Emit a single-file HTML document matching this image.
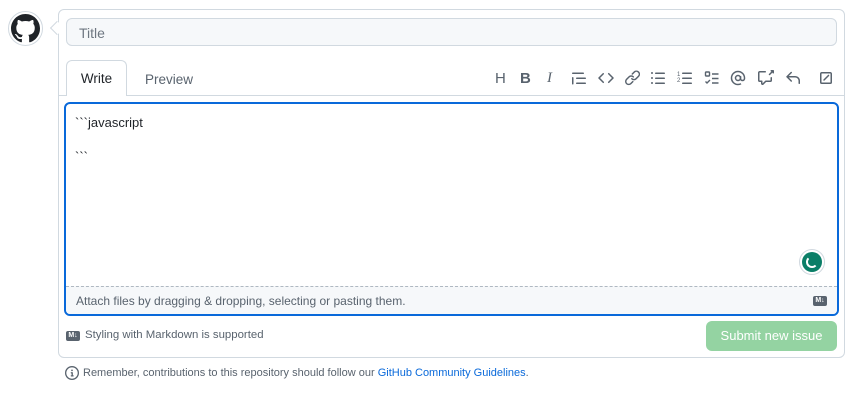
<!DOCTYPE html>
<html><head><meta charset="utf-8"><style>
*{box-sizing:border-box}
body{margin:0;width:854px;height:401px;background:#fff;font-family:"Liberation Sans",sans-serif;position:relative;overflow:hidden;color:#1f2328}
.abs{position:absolute}
.ic{position:absolute;top:70px;width:16px;height:16px}
.ic svg{width:16px;height:16px;fill:#59636e}
.ic svg.st{fill:none}
</style></head><body>
<div class="abs" style="left:8px;top:11px;width:35px;height:35px;border-radius:50%;border:1px solid #d1d9e0;background:#fff"></div>
<svg class="abs" style="left:11px;top:14px" width="29" height="29" viewBox="0 0 16 16"><path fill="#1f2328" d="M8 0C3.58 0 0 3.58 0 8c0 3.54 2.290 6.53 5.47 7.59.4.07.55-.17.55-.38 0-.19-.01-.82-.01-1.49-2.01.37-2.53-.49-2.69-.94-.09-.23-.48-.94-.82-1.13-.28-.15-.68-.52-.01-.53.63-.01 1.08.58 1.23.82.72 1.21 1.87.87 2.330.66.07-.52.28-.87.51-1.07-1.78-.2-3.64-.89-3.64-3.95 0-.87.31-1.590.82-2.150-.08-.2-.36-1.020.08-2.12 0 0 .67-.21 2.2.82.64-.18 1.32-.27 2-.27.68 0 1.36.09 2 .27 1.53-1.04 2.2-.82 2.2-.82.44 1.1.16 1.92.08 2.12.51.56.82 1.27.82 2.15 0 3.07-1.87 3.75-3.65 3.95.29.25.54.73.54 1.48 0 1.07-.01 1.93-.01 2.2 0 .21.15.46.55.38A8.013 8.013 0 0016 8c0-4.42-3.58-8-8-8z"/></svg>
<div class="abs" style="left:58px;top:9px;width:787px;height:349px;border:1px solid #d1d9e0;border-radius:6px"></div>
<div class="abs" style="left:52px;top:23px;width:10px;height:10px;border-left:1px solid #d1d9e0;border-bottom:1px solid #d1d9e0;background:#fff;transform:rotate(45deg)"></div>
<div class="abs" style="left:66px;top:18px;width:771px;height:28px;border:1px solid #d1d9e0;border-radius:6px;background:#f6f8fa;padding:6px 12px;font-size:14px;color:#6e7781">Title</div>
<div class="abs" style="left:59px;top:95px;width:785px;height:1px;background:#d1d9e0"></div>
<div class="abs" style="left:66px;top:60px;width:61px;height:36px;border:1px solid #d1d9e0;border-bottom:none;border-radius:6px 6px 0 0;background:#fff;font-size:13.5px;text-align:center;line-height:36px">Write</div>
<div class="abs" style="left:145px;top:72px;font-size:13.5px;color:#59636e">Preview</div>
<div class="abs" style="left:495px;top:70px;font-size:15px;color:#59636e">H</div>
<div class="abs" style="left:520px;top:70px;font:bold 15px 'Liberation Sans';color:#59636e">B</div>
<div class="abs" style="left:547px;top:70px;font:italic 15px 'Liberation Serif';color:#59636e">I</div>
<div class="ic" style="left:571px"><svg viewBox="0 0 16 16"><path d="M1.75 2.5h10.5a.75.75 0 010 1.5H1.75a.75.75 0 010-1.5zm4 5h8.5a.75.75 0 010 1.5h-8.5a.75.75 0 010-1.5zm0 5h8.5a.75.75 0 010 1.5h-8.5a.75.75 0 010-1.5zM2.5 7.75v6a.75.75 0 01-1.5 0v-6a.75.75 0 011.5 0z"/></svg></div>
<div class="ic" style="left:598px"><svg viewBox="0 0 16 16"><path d="M4.72 3.22a.75.75 0 011.06 1.06L2.06 8l3.72 3.72a.75.75 0 11-1.06 1.06L.47 8.53a.75.75 0 010-1.06zm6.56 0a.75.75 0 10-1.06 1.06L13.94 8l-3.72 3.72a.75.75 0 101.06 1.06l4.25-4.25a.75.75 0 000-1.06z"/></svg></div>
<div class="ic" style="left:624px"><svg viewBox="0 0 16 16"><path d="M7.78 3.47l2-2a3.75 3.75 0 015.3 5.3l-2.5 2.5a3.75 3.75 0 01-5.3 0 .75.75 0 011.06-1.06 2.25 2.25 0 003.18 0l2.5-2.5a2.25 2.25 0 00-3.18-3.18l-2 2a.75.75 0 01-1.06-1.06zm-4.690 9.64a2.25 2.25 0 003.18 0l2-2a.75.75 0 011.06 1.06l-2 2a3.75 3.75 0 01-5.3-5.3l2.5-2.5a3.75 3.75 0 015.3 0 .75.75 0 01-1.06 1.06 2.25 2.25 0 00-3.18 0l-2.5 2.5a2.25 2.25 0 000 3.18z"/></svg></div>
<div class="ic" style="left:650px"><svg viewBox="0 0 16 16"><path d="M5.75 2.5h8.5a.75.75 0 010 1.5h-8.5a.75.75 0 010-1.5zm0 5h8.5a.75.75 0 010 1.5h-8.5a.75.75 0 010-1.5zm0 5h8.5a.75.75 0 010 1.5h-8.5a.75.75 0 010-1.5zM2 14a1 1 0 110-2 1 1 0 010 2zm1-6a1 1 0 11-2 0 1 1 0 012 0zM2 4a1 1 0 110-2 1 1 0 010 2z"/></svg></div>
<div class="ic" style="left:677px"><svg viewBox="0 0 16 16"><path d="M5 3.25a.75.75 0 01.75-.75h8.5a.75.75 0 010 1.5h-8.5A.75.75 0 015 3.25zm0 5a.75.75 0 01.75-.75h8.5a.75.75 0 010 1.5h-8.5A.75.75 0 015 8.25zm0 5a.75.75 0 01.75-.75h8.5a.75.75 0 010 1.5h-8.5a.75.75 0 01-.75-.75z"/><text x="0" y="6" font-size="6" font-family="Liberation Sans" fill="#59636e">1</text><text x="0" y="12" font-size="6" font-family="Liberation Sans" fill="#59636e">2</text></svg></div>
<div class="ic" style="left:704px"><svg class="st" viewBox="0 0 16 16" stroke="#59636e" stroke-width="1.4"><rect x="1.5" y="2" width="4" height="4" rx=".8"/><path d="M8 4h6.5M8 8.5h6.5M8 13h6.5M1.5 11.5l1.5 1.5 3-3"/></svg></div>
<div class="ic" style="left:730px"><svg class="st" viewBox="0 0 16 16" stroke="#59636e" stroke-width="1.5"><circle cx="8" cy="8" r="2.5"/><path d="M10.5 6v2.5a2 2 0 004 0V8A6.5 6.5 0 108 14.5c1.2 0 2.2-.3 3-.8"/></svg></div>
<div class="ic" style="left:758px"><svg viewBox="0 0 16 16"><path d="M1.75 1h5.5a.75.75 0 010 1.5h-5.5a.25.25 0 00-.25.25v7.5c0 .14.11.25.25.25h2c.41 0 .75.34.75.75v2.190l2.72-2.72a.75.75 0 01.53-.22h4.5a.25.25 0 00.25-.25v-2.5a.75.75 0 011.5 0v2.5A1.75 1.75 0 0112.25 12H8.06l-2.57 2.57A1.46 1.46 0 013 13.54V12H1.75A1.75 1.75 0 010 10.25v-7.5C0 1.78.78 1 1.75 1zM12.5.75a.75.75 0 01.75-.75h2a.75.75 0 01.75.75v2a.75.75 0 01-1.5 0v-.19l-2.47 2.47a.75.75 0 01-1.06-1.06l2.47-2.47h-.19A.75.75 0 0112.5.75z"/></svg></div>
<div class="ic" style="left:785px"><svg viewBox="0 0 16 16"><path d="M6.78 1.97a.75.75 0 010 1.06L3.81 6h6.44A4.75 4.75 0 0115 10.75v2.5a.75.75 0 01-1.5 0v-2.5a3.25 3.25 0 00-3.25-3.25H3.81l2.97 2.97a.75.75 0 11-1.06 1.06L1.47 7.28a.75.75 0 010-1.06l4.25-4.25a.75.75 0 011.06 0z"/></svg></div>
<div class="ic" style="left:818px"><svg viewBox="0 0 16 16"><path d="M3.75 2h8.5c.97 0 1.75.78 1.75 1.75v8.5A1.75 1.75 0 0112.25 14h-8.5A1.75 1.75 0 012 12.25v-8.5C2 2.78 2.78 2 3.75 2zm8.5 1.5h-8.5a.25.25 0 00-.25.25v8.5c0 .14.11.25.25.25h8.5a.25.25 0 00.25-.25v-8.5a.25.25 0 00-.25-.25zM5.47 9.47l4.5-4.5a.75.75 0 111.06 1.06l-4.5 4.5a.75.75 0 01-1.06-1.06z"/></svg></div>
<div class="abs" style="left:64px;top:102px;width:775px;height:214px;border:2px solid #0969da;border-radius:6px;overflow:hidden">
<div class="abs" style="left:0;top:182px;width:771px;height:28px;background:#f6f8fa;border-top:1px dashed #afb8c1"></div>
<div class="abs" style="left:9px;top:11px;font-size:13px">&#96;&#96;&#96;javascript</div>
<div class="abs" style="left:9px;top:45px;font-size:13px">&#96;&#96;&#96;</div>
<div class="abs" style="left:10px;top:190px;font-size:12px;color:#59636e">Attach files by dragging &amp; dropping, selecting or pasting them.</div>
<div class="abs" style="left:747px;top:192px;width:14px;height:10px;background:#59636e;border-radius:2px;color:#fff;font:bold 7px 'Liberation Sans';text-align:center;line-height:10px">M↓</div>
</div>
<div class="abs" style="left:799px;top:249px;width:26px;height:26px;border-radius:50%;background:#fff;border:1px solid #d1d9e0"></div>
<div class="abs" style="left:802px;top:252px;width:20px;height:20px;border-radius:50%;background:#0a7e67"></div>
<div class="abs" style="left:806px;top:256px;width:12px;height:12px;border-radius:50%;border:2px solid #fff;border-top-color:transparent;border-right-color:transparent"></div>
<div class="abs" style="left:66px;top:331px;width:14px;height:10px;background:#59636e;border-radius:2px;color:#fff;font:bold 7px 'Liberation Sans';text-align:center;line-height:10px">M↓</div>
<div class="abs" style="left:85px;top:329px;font-size:11.4px;color:#59636e">Styling with Markdown is supported</div>
<div class="abs" style="left:706px;top:321px;width:131px;height:30px;border-radius:6px;background:#94d3a2;color:#fff;font-size:13px;text-align:center;line-height:30px">Submit new issue</div>
<svg class="abs" style="left:65px;top:366px" width="14" height="14" viewBox="0 0 16 16"><path fill="#59636e" d="M0 8a8 8 0 1116 0A8 8 0 010 8zm8-6.5a6.5 6.5 0 100 13 6.5 6.5 0 000-13zM6.5 7.75A.75.75 0 017.25 7h1a.75.75 0 01.75.75v2.75h.25a.75.75 0 010 1.5h-2a.75.75 0 010-1.5h.25v-2h-.25a.75.75 0 01-.75-.75zM8 6a1 1 0 110-2 1 1 0 010 2z"/></svg>
<div class="abs" style="left:83px;top:367px;font-size:11px;color:#59636e">Remember, contributions to this repository should follow our <span style="color:#0969da">GitHub Community Guidelines</span>.</div>
</body></html>
